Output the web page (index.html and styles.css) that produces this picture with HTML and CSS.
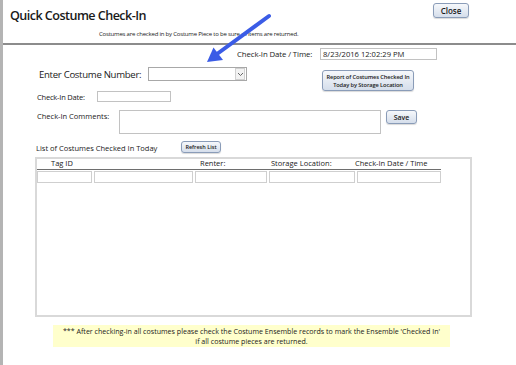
FILE: index.html
```html
<!DOCTYPE html>
<html lang="en">
<head>
  <meta charset="UTF-8">
  <title>Quick Costume Check-In</title>
  <link rel="stylesheet" href="styles.css">
</head>
<body>
  <div class="page">
    <div class="header">
      <div class="header-top">
        <h1 class="title">Quick Costume Check-In</h1>
        <button class="btn btn-close">Close</button>
      </div>
      <p class="subtitle">Costumes are checked in by Costume Piece to be sure all items are returned.</p>
    </div>

    <div class="row row-datetime">
      <label class="lbl-datetime">Check-In Date / Time:</label>
      <input class="field field-datetime" type="text" value="8/23/2016 12:02:29 PM">
    </div>

    <div class="row row-number">
      <label class="lbl-number">Enter Costume Number:</label>
      <div class="select">
        <span class="select-arrow">
          <svg width="7" height="5" viewBox="0 0 7 5"><path d="M1 1 L3.5 3.5 L6 1" fill="none" stroke="#666" stroke-width="1"/></svg>
        </span>
      </div>
      <button class="btn btn-report">Report of Costumes Checked In<br>Today by Storage Location</button>
    </div>

    <div class="row row-date">
      <label class="lbl-small lbl-date">Check-In Date:</label>
      <input class="field field-date" type="text">
    </div>

    <div class="row row-comments">
      <label class="lbl-small lbl-comments">Check-In Comments:</label>
      <textarea class="field field-comments"></textarea>
      <button class="btn btn-save">Save</button>
    </div>

    <div class="row row-list">
      <span class="lbl-small lbl-list">List of Costumes Checked In Today</span>
      <button class="btn btn-refresh">Refresh List</button>
    </div>

    <div class="grid-box">
      <div class="grid-head">
        <span class="h-tag">Tag ID</span>
        <span></span>
        <span class="h-renter">Renter:</span>
        <span class="h-storage">Storage Location:</span>
        <span class="h-date">Check-In Date / Time</span>
      </div>
      <div class="grid-row">
        <input class="cell" type="text">
        <input class="cell" type="text">
        <input class="cell" type="text">
        <input class="cell" type="text">
        <input class="cell" type="text">
      </div>
    </div>

    <div class="note">
      *** After checking-in all costumes please check the Costume Ensemble records to mark the Ensemble 'Checked In'<br>
      if all costume pieces are returned.
    </div>

    <svg class="pointer" width="80" height="60" viewBox="200 10 80 60">
      <line x1="269" y1="16" x2="217" y2="54" stroke="#3b5ce6" stroke-width="4" stroke-linecap="round"/>
      <polygon points="207,62 213.5,47.5 223,60" fill="#3b5ce6"/>
    </svg>
  </div>
</body>
</html>
```

FILE: styles.css
```css
body {
  margin: 0;
  background: #fff;
  font-family: 'Open Sans', sans-serif;
  color: #1a1a1a;
}

.page {
  position: relative;
  min-height: 365px;
  border-left: 3px solid #b4b4b4;
  box-sizing: border-box;
}

.header {
  height: 43px;
  border-bottom: 2px solid #8c8c8c;
}

.header-top {
  display: flex;
  justify-content: space-between;
  align-items: flex-start;
  padding: 3px 47px 0 7px;
}

.title {
  margin: 4px 0 0;
  font-size: 12.6px;
  font-weight: 600;
  line-height: 17px;
  letter-spacing: -0.55px;
}

.subtitle {
  margin: 6px 0 0 96px;
  font-size: 6px;
  line-height: 8px;
  letter-spacing: -0.2px;
  white-space: nowrap;
}

.btn {
  font-family: 'Open Sans', sans-serif;
  color: #1a1a1a;
  background: linear-gradient(#f6f8fb, #d5deeb);
  border: 1px solid #8a9cb8;
  border-radius: 3px;
  box-shadow: 0 1px 1px rgba(0,0,0,0.15);
  padding: 0;
  white-space: nowrap;
  cursor: pointer;
}

.btn-close {
  width: 36px;
  height: 15px;
  font-size: 8px;
  font-weight: 600;
}

.field {
  box-sizing: border-box;
  border: 1px solid #c2c2c2;
  background: #fff;
  padding: 0 2px;
  margin: 0;
  font-family: 'Open Sans', sans-serif;
  resize: none;
}

.row {
  display: flex;
  align-items: flex-start;
  white-space: nowrap;
}

.row-datetime {
  margin-top: 3px;
  padding-left: 234px;
  height: 12px;
}

.lbl-datetime {
  width: 83px;
  font-size: 7.8px;
  line-height: 12px;
  letter-spacing: -0.1px;
}

.field-datetime {
  width: 117px;
  height: 12px;
  font-size: 7.6px;
  color: #1a1a1a;
}

.row-number {
  margin-top: 7px;
  padding-left: 36px;
  height: 24px;
}

.lbl-number {
  width: 109px;
  font-size: 9.6px;
  line-height: 15px;
  letter-spacing: -0.3px;
}

.select {
  box-sizing: border-box;
  width: 99px;
  height: 14px;
  border: 1px solid #a8a8a8;
  display: flex;
  justify-content: flex-end;
  align-items: center;
  padding-right: 1px;
}

.select-arrow {
  width: 8px;
  height: 10px;
  border: 1px solid #d0d0d0;
  background: #f2f2f2;
  display: flex;
  align-items: center;
  justify-content: center;
}

.btn-report {
  margin: 3px 0 0 75px;
  width: 92px;
  height: 21px;
  font-size: 5.7px;
  font-weight: 600;
  line-height: 8px;
  letter-spacing: -0.1px;
}

.lbl-small {
  font-size: 7.5px;
}

.row-date {
  padding-left: 34px;
  height: 11px;
}

.lbl-date {
  width: 60px;
  line-height: 11px;
  padding-top: 1px;
  letter-spacing: -0.2px;
}

.field-date {
  width: 74px;
  height: 11px;
}

.row-comments {
  margin-top: 8px;
  padding-left: 34px;
  height: 24px;
}

.lbl-comments {
  width: 82px;
  line-height: 10px;
  padding-top: 1px;
}

.field-comments {
  width: 262px;
  height: 24px;
}

.btn-save {
  margin-left: 5px;
  width: 31px;
  height: 14px;
  font-size: 7px;
  font-weight: 600;
}

.row-list {
  margin-top: 7px;
  padding-left: 33px;
  height: 12px;
}

.lbl-list {
  width: 145px;
  line-height: 12px;
  padding-top: 1px;
}

.btn-refresh {
  width: 40px;
  height: 12px;
  font-size: 5.5px;
  font-weight: 600;
}

.grid-box {
  box-sizing: border-box;
  margin: 4px 0 0 32px;
  width: 437px;
  height: 160px;
  border: 2px solid #d9d9d9;
  padding-top: 0;
}

.grid-head,
.grid-row {
  display: grid;
  grid-template-columns: 55px 99px 72px 86px 84px;
  column-gap: 2px;
  width: 404px;
}

.grid-head {
  font-size: 7.5px;
  line-height: 9px;
  padding-bottom: 1px;
  border-bottom: 1px solid #6e6e6e;
  white-space: nowrap;
}

.h-tag { padding-left: 14px; }
.h-renter { padding-left: 5px; }
.h-storage { padding-left: 2px; }
.h-date { margin-left: -2px; }

.grid-row {
  margin-top: 1px;
}

.cell {
  box-sizing: border-box;
  height: 12px;
  border: 1px solid #cfcfcf;
  margin: 0;
  padding: 0;
}

.note {
  margin: 8px 0 0 50px;
  width: 397px;
  background: #ffffcc;
  font-size: 7.1px;
  line-height: 10px;
  text-align: center;
  padding: 1px 0;
}

.pointer {
  position: absolute;
  left: 197px;
  top: 10px;
}
```
